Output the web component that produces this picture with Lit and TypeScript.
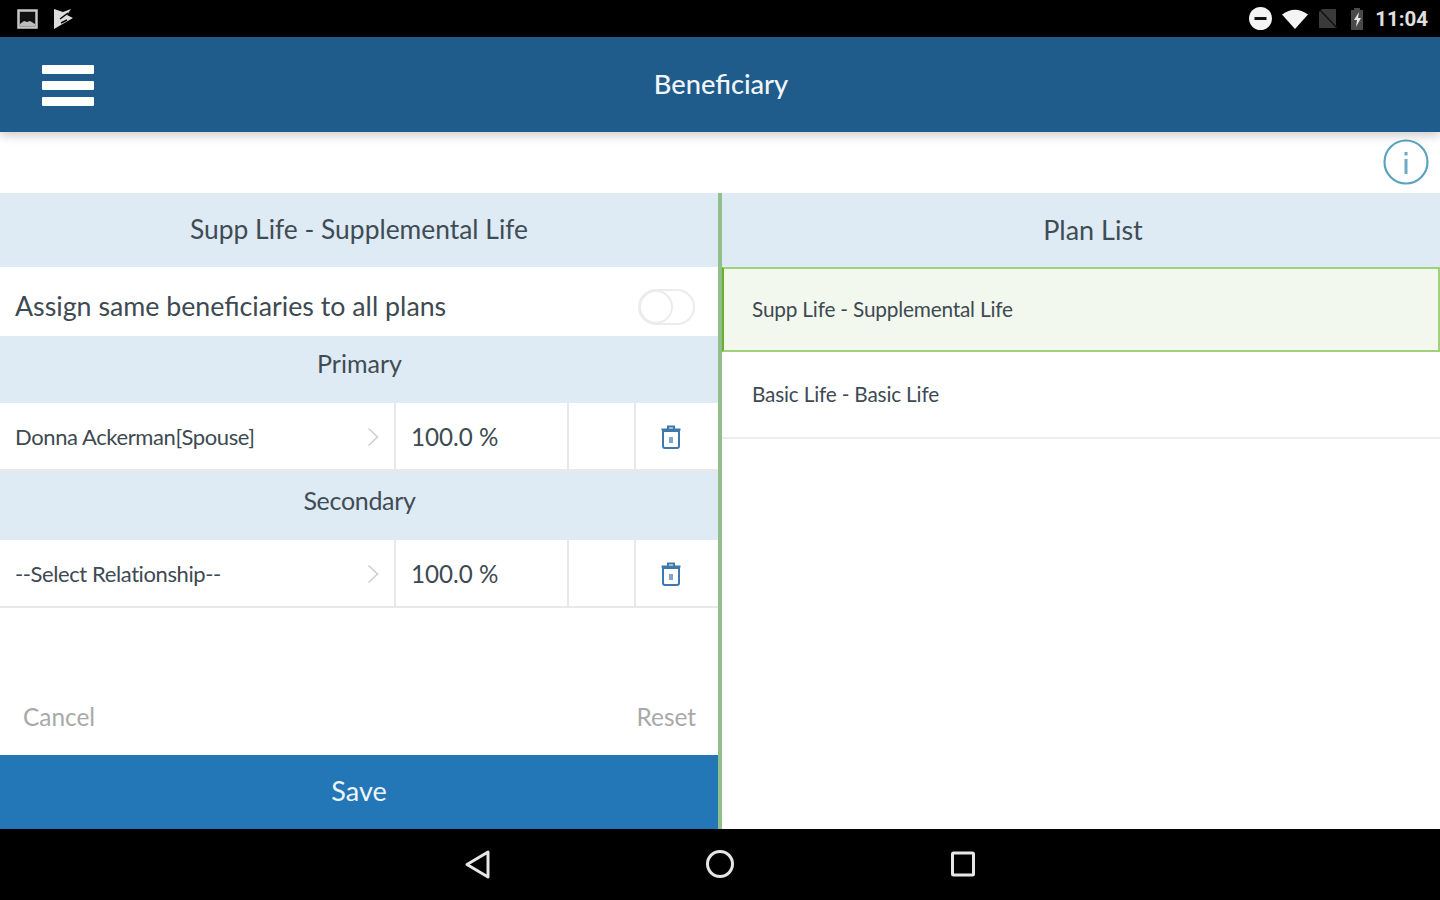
import { LitElement, html, css, svg } from "lit";
import { customElement } from "lit/decorators.js";

const trash = svg`<svg class="trash" width="22" height="26" viewBox="0 0 22 26" fill="none" stroke="#3f78ab" stroke-width="2"><path d="M3 7h16v15a2 2 0 0 1-2 2H5a2 2 0 0 1-2-2z"/><path d="M1.500 5.500h19M8 5V2.500h6V5" /><path d="M11 13v6" stroke-width="4" stroke="#7fa5c8"/></svg>`;
const chevron = svg`<svg class="chev" width="12" height="20" viewBox="0 0 12 20" fill="none" stroke="#cfcfcf" stroke-width="1.600"><path d="M1.500 1.500l9 8.500-9 8.500"/></svg>`;

@customElement("app-root")
export class AppRoot extends LitElement {
  static styles = css`
    :host { display: flex; flex-direction: column; width: 1440px; height: 900px; overflow: hidden; background: #fff; font-family: Lato, "Liberation Sans", sans-serif; color: #3d4a52; }
    .status { height: 37px; background: #000; display: flex; align-items: center; padding: 0 12px 0 17px; flex: none; }
    .status .left { display: flex; gap: 15px; align-items: center; flex: 1; }
    .status .right { display: flex; align-items: center; }
    .wifi { margin-left: 10px; }
    .signal { margin-left: 10px; }
    .battery { margin-left: 12px; }
    .time { color: #e0e0e0; font-size: 20.500px; font-weight: 700; margin-left: 11px; font-family: Roboto, sans-serif; }
    .appbar { height: 95px; flex: none; background: #1f5c8b; display: flex; align-items: center; justify-content: center; position: relative; box-shadow: 0 3px 10px rgba(0,0,0,.22); z-index: 1; }
    .burger { position: absolute; left: 42px; top: 28px; width: 52px; display: flex; flex-direction: column; gap: 7.500px; }
    .burger i { display: block; height: 8.500px; background: #fff; border-radius: 1px; }
    .appbar h1 { margin: 0; padding: 0 0 2px 2px; font-size: 27.200px; font-weight: 500; color: #f2f6fa; }
    .infobar { height: 61px; flex: none; display: flex; justify-content: flex-end; align-items: center; padding: 0 11px 2px 0; box-sizing: border-box; }
    .main { flex: 1; display: flex; min-height: 0; }
    .left-p { width: 718px; flex: none; display: flex; flex-direction: column; }
    .divider { width: 4px; flex: none; background: #90bf8a; }
    .right-p { flex: 1; display: flex; flex-direction: column; }
    .head { background: #deeaf4; display: flex; align-items: center; justify-content: center; box-sizing: border-box; color: #3f4c54; }
    .head.top { height: 74px; flex: none; font-size: 26.400px; padding-bottom: 2px; }
    .head.plan { font-size: 27px; padding-left: 24px; }
    .head.sub { height: 67px; flex: none; font-size: 25px; padding: 0 0 14px 1px; }
    .head.sub.two { height: 69px; padding-bottom: 12px; letter-spacing: -0.300px; }
    .assign { height: 69px; flex: none; display: flex; align-items: center; justify-content: space-between; box-sizing: border-box; padding: 8px 23px 0 15px; font-size: 26.750px; }
    .toggle { width: 57px; height: 36px; box-sizing: border-box; border: 2px solid #ececec; border-radius: 18px; position: relative; margin-top: 2px; }
    .toggle::before { content: ""; position: absolute; left: -1px; top: -1px; width: 34px; height: 34px; box-sizing: border-box; border: 2px solid #ececec; border-radius: 50%; background: #fff; }
    .row { height: 68px; flex: none; display: grid; grid-template-columns: 396px 173px 67px 82px; box-sizing: border-box; border-bottom: 2px solid #e8e8e8; }
    .cell { display: flex; align-items: center; border-right: 2px solid #e8e8e8; box-sizing: border-box; }
    .cell:last-child { border-right: none; justify-content: center; padding: 2px 12px 0 0; }
    .name { justify-content: space-between; padding: 0 15px 0 15px; font-size: 22px; letter-spacing: -0.400px; }
    .chev { margin-top: 2px; }
    .pct { padding-left: 15px; font-size: 24.200px; }
    .spacer { flex: 1; min-height: 0; }
    .actions { flex: none; display: flex; justify-content: space-between; align-items: center; box-sizing: border-box; padding: 0 22px 0 23px; font-size: 24.400px; color: #a9a9a9; height: 30px; margin-bottom: 24px; }
    .save { height: 74px; flex: none; background: #2377b7; color: #eef5fa; display: flex; align-items: center; justify-content: center; box-sizing: border-box; padding-bottom: 4px; font-size: 27px; }
    .item { display: flex; align-items: center; box-sizing: border-box; padding-left: 28px; padding-bottom: 2px; font-size: 20.800px; letter-spacing: -0.190px; }
    .item.sel { height: 85px; background: #f3f8ee; border: 2px solid #9fd07a; border-left-color: #68b02c; }
    .item.plain { height: 87px; border-bottom: 2px solid #ececec; padding-left: 30px; }
    .nav { height: 71px; flex: none; background: #000; position: relative; }
    .nav svg { position: absolute; top: 20px; }
  `;

  render() {
    return html`
      <div class="status">
        <div class="left">
          <svg width="21" height="20" viewBox="0 0 21 20"><rect x="1.500" y="1.500" width="18" height="17" fill="#111" stroke="#c8c8c8" stroke-width="2.500"/><path d="M3 15l4-3 3 1 3-1 5 3v2H3z" fill="#bdbdbd"/></svg>
          <svg width="21" height="22" viewBox="0 0 21 22"><path d="M1 1l9 3 8-3-4 6 6 3L1 21z" fill="#dcdcdc"/><path d="M7 11l8-6M8 15l6-3" stroke="#000" stroke-width="1.500"/></svg>
        </div>
        <div class="right">
          <svg width="23" height="23" viewBox="0 0 23 23"><circle cx="11.500" cy="11.500" r="11.500" fill="#f4f4f4"/><rect x="5.500" y="10" width="12" height="3" fill="#111"/></svg>
          <svg class="wifi" width="26" height="20" viewBox="0 0 26 20"><path d="M0 5.500Q13-4 26 5.500L13 20z" fill="#f4f4f4"/></svg>
          <svg class="signal" width="20" height="21" viewBox="0 0 20 21"><path d="M4 1H18V20H1V4z" fill="#3a3a3a"/><path d="M2 2l17 18" stroke="#111" stroke-width="1.500"/></svg>
          <svg class="battery" width="14" height="22" viewBox="0 0 14 22"><rect x="4" y="0" width="6" height="3" fill="#4a4a4a"/><rect x="1" y="2" width="12" height="20" fill="#4a4a4a"/><path d="M9 4l-5 8h3l-1 7 5-9H8z" fill="#e8e8e8"/></svg>
          <span class="time">11:04</span>
        </div>
      </div>
      <div class="appbar">
        <div class="burger"><i></i><i></i><i></i></div>
        <h1>Beneficiary</h1>
      </div>
      <div class="infobar">
        <svg width="46" height="48" viewBox="0 0 46 48" fill="none"><circle cx="23" cy="24" r="21.500" stroke="#5aa3c0" stroke-width="2.200"/><rect x="21.500" y="21" width="3" height="15" fill="#6fa9c6"/><rect x="21.500" y="14" width="3" height="3.500" fill="#6fa9c6"/></svg>
      </div>
      <div class="main">
        <div class="left-p">
          <div class="head top">Supp Life - Supplemental Life</div>
          <div class="assign"><span>Assign same beneficiaries to all plans</span><span class="toggle"></span></div>
          <div class="head sub">Primary</div>
          <div class="row">
            <div class="cell name"><span>Donna Ackerman[Spouse]</span>${chevron}</div>
            <div class="cell pct">100.0 %</div>
            <div class="cell"></div>
            <div class="cell">${trash}</div>
          </div>
          <div class="head sub two">Secondary</div>
          <div class="row">
            <div class="cell name"><span>--Select Relationship--</span>${chevron}</div>
            <div class="cell pct">100.0 %</div>
            <div class="cell"></div>
            <div class="cell">${trash}</div>
          </div>
          <div class="spacer"></div>
          <div class="actions"><span>Cancel</span><span>Reset</span></div>
          <div class="save">Save</div>
        </div>
        <div class="divider"></div>
        <div class="right-p">
          <div class="head top plan">Plan List</div>
          <div class="item sel">Supp Life - Supplemental Life</div>
          <div class="item plain">Basic Life - Basic Life</div>
        </div>
      </div>
      <div class="nav">
        <svg style="left:464px" width="28" height="30" viewBox="0 0 28 30" fill="none" stroke="#e6e6e6" stroke-width="3" stroke-linejoin="round"><path d="M24 3v25L3 15.500z"/></svg>
        <svg style="left:705px" width="30" height="30" viewBox="0 0 30 30" fill="none" stroke="#e6e6e6" stroke-width="3"><circle cx="15" cy="15" r="12.500"/></svg>
        <svg style="left:949px" width="28" height="30" viewBox="0 0 28 30" fill="none" stroke="#e6e6e6" stroke-width="3" stroke-linejoin="round"><rect x="3.500" y="4" width="21" height="22" rx="1"/></svg>
      </div>
    `;
  }
}
